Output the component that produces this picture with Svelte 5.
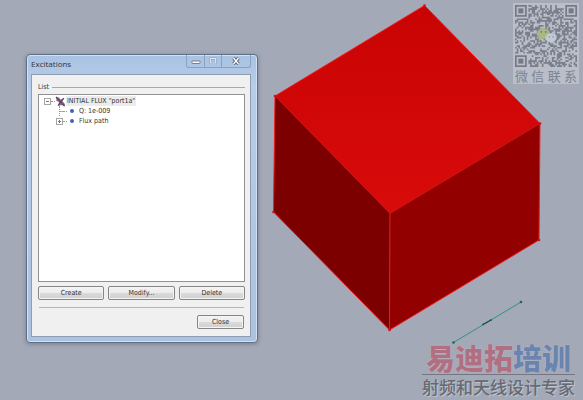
<script lang="ts">
	type Node = { id: number; label: string; expandable: boolean };

	const QR_SIZE = 37;

	let expanded = $state(true);
	let selected = $state(0);

	const children: Node[] = [
		{ id: 1, label: 'Q: 1e-009', expandable: false },
		{ id: 2, label: 'Flux path', expandable: true }
	];

	const corners = [
		[0, 0],
		[QR_SIZE - 7, 0],
		[0, QR_SIZE - 7]
	];

	function inCorner(x: number, y: number) {
		return corners.some(([cx, cy]) => x >= cx - 1 && x <= cx + 7 && y >= cy - 1 && y <= cy + 7);
	}

	// one path for all the dark modules, seeded so it is stable
	function modules() {
		let seed = 4127;
		let d = '';
		for (let y = 0; y < QR_SIZE; y++) {
			for (let x = 0; x < QR_SIZE; x++) {
				seed = (seed * 16807) % 2147483647;
				if (inCorner(x, y)) continue;
				if (seed / 2147483647 < 0.5) d += `M${x} ${y}h1v1h-1z`;
			}
		}
		return d;
	}

	const qrPath = modules();
</script>

<main class="desktop">
	<svg class="model" viewBox="0 0 583 400" preserveAspectRatio="xMinYMin meet" aria-hidden="true">
		<defs>
			<linearGradient id="top" x1="0" y1="0" x2="0" y2="1">
				<stop offset="0" stop-color="#c90303" />
				<stop offset="1" stop-color="#d90b0b" />
			</linearGradient>
		</defs>
		<path d="M424.500 5.500L540 123.500L390 213.500L275 96z" fill="url(#top)" />
		<path d="M275 96L390 213.500L389.500 330L273.500 212z" fill="#7d0000" />
		<path d="M390 213.500L540 123.500L539 240L389.500 330z" fill="#930000" />
		<g fill="none" stroke="#f01c20" stroke-linejoin="round">
			<path
				d="M424.500 5.500L540 123.500L539 240L389.500 330L273.500 212L275 96z"
				stroke-width="1"
			/>
			<path d="M390 213.500L389.500 330" stroke="#e02020" />
			<path d="M275 96L390 213.500L540 123.500" stroke="#d80a0a" stroke-width="0.800" />
		</g>
		<g fill="#d01018">
			<circle cx="424.500" cy="5.500" r="1.300" />
			<circle cx="540" cy="123.500" r="1.300" />
			<circle cx="539" cy="240" r="1.300" />
			<circle cx="389.500" cy="330" r="1.300" />
			<circle cx="273.500" cy="212" r="1.300" />
			<circle cx="275" cy="96" r="1.300" />
		</g>
		<path d="M453.500 342.500L521 302" stroke="#34917e" stroke-width="1" />
		<path d="M483 324.500L491 320" stroke="#23443f" stroke-width="1.200" />
		<g fill="#146b52">
			<circle cx="453.500" cy="342.500" r="1.300" />
			<circle cx="521" cy="302" r="1.300" />
			<circle cx="483" cy="324.500" r="1" />
			<circle cx="491" cy="320" r="1" />
		</g>
	</svg>

	<section class="window" aria-labelledby="window-title">
		<header class="titlebar">
			<h1 id="window-title">Excitations</h1>
			<div class="controls">
				<button type="button" aria-label="Minimize">
					<svg viewBox="0 0 10 8" width="10" height="8">
						<rect x="1" y="4" width="8" height="2.500" rx="0.500" fill="#fff" stroke="#5b6675" stroke-width="0.800" />
					</svg>
				</button>
				<button type="button" aria-label="Maximize" disabled>
					<svg viewBox="0 0 10 8" width="10" height="8">
						<rect x="2.500" y="1.500" width="5" height="4.500" fill="none" stroke="#8da3c2" stroke-width="2" />
						<rect x="2.500" y="1.500" width="5" height="4.500" fill="none" stroke="#d6e4f6" />
					</svg>
				</button>
				<button type="button" class="exit" aria-label="Close window">
					<svg viewBox="0 0 10 8" width="10" height="8">
						<path d="M2.500 1L7.500 7M7.500 1L2.500 7" stroke="#4d5764" stroke-width="3.200" />
						<path d="M2.500 1L7.500 7M7.500 1L2.500 7" stroke="#fff" stroke-width="1.400" />
					</svg>
				</button>
			</div>
		</header>

		<div class="client">
			<h2 class="legend">List</h2>

			<div class="tree">
				<div class="row">
					<button
						type="button"
						class="toggle"
						aria-label="Toggle INITIAL FLUX"
						aria-expanded={expanded}
						onclick={() => (expanded = !expanded)}
					>
						<svg viewBox="0 0 7 7" width="7" height="7">
							<rect x="0.500" y="0.500" width="6" height="6" fill="#fff" stroke="#a5a5a5" />
							<path d={expanded ? 'M2 3.500h3' : 'M2 3.500h3M3.500 2v3'} stroke="#777" />
						</svg>
					</button>
					<span class="dash"></span>
					<svg class="flux" viewBox="0 0 11 11" width="11" height="11">
						<path d="M1 1l3 .5 1.500 2L9 2l-1.500 3.500L10 8l-.5 2.500L7 9 3 10l1-3.500L1.500 4z" fill="#8d6d88" />
						<path d="M1 1l8.500 9M3 9.500L9 2" stroke="#5c4160" stroke-width="1.200" />
						<path d="M1.500 4.500l2-.5M6 8l3-1" stroke="#ad4f4f" />
					</svg>
					<button
						type="button"
						class="label"
						class:selected={selected === 0}
						onclick={() => (selected = 0)}>INITIAL FLUX "port1a"</button
					>
				</div>
				{#if expanded}
					<ul>
						{#each children as node (node.id)}
							<li class="row">
								{#if node.expandable}
									<button type="button" class="toggle" aria-label="Expand {node.label}">
										<svg viewBox="0 0 7 7" width="7" height="7">
											<rect x="0.500" y="0.500" width="6" height="6" fill="#fff" stroke="#a5a5a5" />
											<path d="M2 3.500h3M3.500 2v3" stroke="#777" />
										</svg>
									</button>
								{:else}
									<span class="branch"></span>
								{/if}
								<span class="dash"></span>
								<span class="dot"></span>
								<button
									type="button"
									class="label"
									class:selected={selected === node.id}
									onclick={() => (selected = node.id)}>{node.label}</button
								>
							</li>
						{/each}
					</ul>
				{/if}
			</div>

			<div class="actions">
				<button type="button" class="btn">Create</button>
				<button type="button" class="btn">Modify...</button>
				<button type="button" class="btn">Delete</button>
			</div>

			<footer>
				<button type="button" class="btn">Close</button>
			</footer>
		</div>
	</section>

	<aside class="contact">
		<svg viewBox="0 0 {QR_SIZE} {QR_SIZE}" role="img" aria-label="QR code">
			<path d={qrPath} fill="#797f8b" />
			{#each corners as [x, y]}
				<rect x={x + 0.5} y={y + 0.5} width="6" height="6" fill="none" stroke="#747a86" />
				<rect x={x + 2} y={y + 2} width="3" height="3" fill="#747a86" />
			{/each}
			<ellipse cx="17" cy="17" rx="3.800" ry="3.200" fill="#a6b984" />
			<path d="M14.500 19l-.5 2.500 2.500-1.500z" fill="#a6b984" />
			<ellipse cx="21.500" cy="19.500" rx="3.300" ry="2.700" fill="#c1c9d4" />
			<g fill="#6c7a5e">
				<circle cx="15.700" cy="16" r="0.500" />
				<circle cx="18.300" cy="16" r="0.500" />
				<circle cx="20.500" cy="19" r="0.400" />
				<circle cx="22.700" cy="19" r="0.400" />
			</g>
		</svg>
		<p>
			{#each '微信联系' as char}
				<span>{char}</span>
			{/each}
		</p>
	</aside>

	<aside class="brand">
		<p class="name"><span>易迪拓</span><b>培训</b></p>
		<p class="tagline">射频和天线设计专家</p>
	</aside>
</main>

<style>
	:global(body) {
		margin: 0;
		background: #a3a9b7;
	}

	.desktop {
		position: relative;
		min-height: 100vh;
		overflow: hidden;
		background: #a3a9b7;
		color: #333;
		font-family: 'DejaVu Sans Condensed', 'DejaVu Sans', sans-serif;
		font-size: 7px;
	}

	.model {
		display: block;
		width: 100%;
	}

	h1,
	h2,
	p,
	ul {
		margin: 0;
		padding: 0;
		font-weight: normal;
	}
	button {
		margin: 0;
		padding: 0;
		border: none;
		background: none;
		color: inherit;
		font: inherit;
	}

	.window {
		position: absolute;
		top: 54px;
		left: 26px;
		box-sizing: border-box;
		width: 232px;
		padding: 0 6px 5px 4px;
		border: 1px solid #5f6f86;
		border-radius: 4px;
		background: linear-gradient(#a9c2e2, #b7cde8 30px, #abc3e0);
		box-shadow:
			inset 0 0 0 1px #d2e1f3,
			0 1px 4px rgba(50, 60, 80, 0.4);
	}

	.titlebar {
		display: flex;
		align-items: flex-start;
		justify-content: space-between;
		height: 19px;
	}
	.titlebar h1 {
		font-family: 'Open Sans', sans-serif;
		font-size: 8px;
		line-height: 18px;
	}

	.controls {
		display: flex;
		border: 1px solid #8ba1c1;
		border-top: none;
		border-radius: 0 0 3px 3px;
	}
	.controls button {
		display: flex;
		align-items: center;
		justify-content: center;
		width: 17px;
		height: 12px;
	}
	.controls button + button {
		border-left: 1px solid #8ba1c1;
	}
	.controls .exit {
		width: 29px;
	}

	.client {
		padding: 7px 5px 7px 6px;
		border: 1px solid #8d9db3;
		background: #f0f0f0;
	}

	.legend {
		display: flex;
		align-items: center;
		gap: 3px;
		font-size: 7px;
		line-height: 10px;
	}
	.legend::after {
		content: '';
		flex: 1;
		border-top: 1px solid #a9a9a9;
	}

	.tree {
		box-sizing: border-box;
		min-height: 188px;
		margin-top: 2px;
		padding: 1px 5px;
		border: 1px solid #929292;
		background: #fff;
	}
	.tree ul {
		margin-left: 12px;
		list-style: none;
	}
	.row {
		display: flex;
		align-items: center;
		height: 10px;
	}
	.toggle {
		display: flex;
	}
	.dash {
		width: 4px;
		border-top: 1px dotted #999;
	}
	.branch {
		align-self: stretch;
		width: 3px;
		margin-left: 3px;
		border-left: 1px dotted #999;
		background: linear-gradient(#aaa, #aaa) center / 100% 1px no-repeat;
	}
	.dot {
		width: 4px;
		height: 4px;
		margin: 0 4px 0 3px;
		border-radius: 50%;
		background: #4563ad;
	}
	.label {
		padding: 0 1px;
		line-height: 10px;
		white-space: nowrap;
	}
	.label.selected {
		background: #ececec;
	}

	.actions {
		display: grid;
		grid-template-columns: repeat(3, 1fr);
		gap: 4px;
		margin-top: 4px;
	}
	.btn {
		box-sizing: border-box;
		height: 14px;
		border: 1px solid #858585;
		border-radius: 2px;
		background: linear-gradient(#f4f4f4, #ebebeb 50%, #dadada 51%, #d0d0d0);
		box-shadow: inset 0 0 0 1px #f4f4f4;
		line-height: 12px;
	}
	.btn:hover {
		border-color: #3c7fb1;
	}

	footer {
		display: flex;
		justify-content: flex-end;
		margin: 7px 1px 0;
		padding-top: 7px;
		border-top: 1px solid #b5b5b5;
	}
	footer .btn {
		width: 47px;
	}

	.contact {
		position: absolute;
		top: 3px;
		right: 4px;
		box-sizing: border-box;
		width: 66px;
		padding: 2px 2px 0;
		background: #b9bec9;
		color: #7e848f;
	}
	.contact svg {
		display: block;
		width: 100%;
	}
	.contact p {
		display: flex;
		justify-content: space-between;
		font-family: 'Noto Sans CJK SC', sans-serif;
		font-size: 13px;
		line-height: 17px;
	}

	.brand {
		position: absolute;
		right: 8px;
		bottom: 1px;
		font-family: 'Noto Sans CJK SC', sans-serif;
		white-space: nowrap;
	}
	.name {
		padding-bottom: 2px;
		border-bottom: 1px solid #74777f;
		color: #b07082;
		font-size: 29px;
		font-weight: 900;
		line-height: 30px;
		text-align: center;
		text-shadow: 0 0 1px #d3d0d8;
	}
	.name b {
		color: #6b84af;
		font-weight: inherit;
	}
	.tagline {
		color: #666a73;
		font-size: 17px;
		font-weight: 500;
		line-height: 24px;
		text-shadow: 1px 1px 0 #c0c5ce;
	}
</style>
